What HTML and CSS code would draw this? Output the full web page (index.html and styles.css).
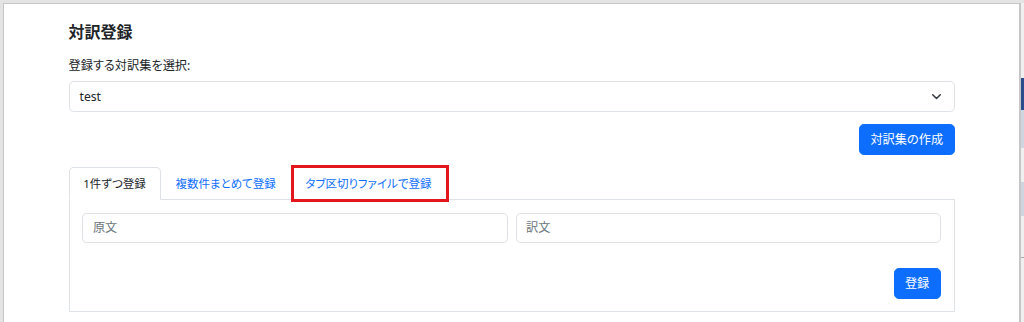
FILE: index.html
```html
<!DOCTYPE html>
<html lang="ja">
<head>
    <meta charset="UTF-8">
    <meta name="viewport" content="width=device-width, initial-scale=1.0">
    <title>対訳登録</title>
    <link rel="stylesheet" href="styles.css">
</head>
<body>
    <div class="modal">
        <div class="content">
            <h5 class="title">対訳登録</h5>
            <label class="label">登録する対訳集を選択:</label>
            <div class="select">
                <span>test</span>
                <svg width="11" height="11" viewBox="0 0 16 16"><path d="M2.5 5.5l5.5 5.5 5.5-5.5" fill="none" stroke="#343a40" stroke-width="2.2" stroke-linecap="round" stroke-linejoin="round"/></svg>
            </div>
            <div class="actions">
                <button class="btn">対訳集の作成</button>
            </div>

            <!-- tabs -->
            <ul class="tabs">
                <li><a class="tab active">1件ずつ登録</a></li>
                <li><a class="tab">複数件まとめて登録</a></li>
                <li class="marked"><a class="tab">タブ区切りファイルで登録</a><span class="highlight"></span></li>
            </ul>
            <div class="pane">
                <div class="fields">
                    <input type="text" placeholder="原文">
                    <input type="text" placeholder="訳文">
                </div>
                <div class="submit">
                    <button class="btn">登録</button>
                </div>
            </div>
        </div>
    </div>
    <div class="peek">
        <div class="peek-light" style="height: 75px"></div>
        <div class="peek-blue" style="height: 32px"></div>
        <div class="peek-gray" style="height: 38px"></div>
        <div class="peek-light" style="height: 34px"></div>
        <div class="peek-gray" style="height: 34px"></div>
        <div class="peek-light" style="height: 41px"></div>
        <div class="peek-line"></div>
        <div class="peek-light" style="height: 70px"></div>
    </div>
</body>
</html>
```

FILE: styles.css
```css
* {
    box-sizing: border-box;
}
body {
    margin: 0;
    height: 322px;
    overflow: hidden;
    padding: 3px 0 0 3px;
    background-color: #e4e4e4;
    display: flex;
    font-family: "Noto Sans", "Noto Sans CJK JP", sans-serif;
    font-feature-settings: "palt";
    font-size: 12.2px;
    line-height: 19.2px;
    color: #212529;
}
.modal {
    flex: 1;
    background-color: white;
    border: 1px solid #c6c6c6;
    border-bottom: none;
}
.content {
    width: 886px;
    margin: 0 auto;
    padding-top: 19px;
}
.title {
    margin: 0 0 14px;
    font-size: 16px;
    font-weight: 700;
    line-height: 1.2;
}
.label {
    display: block;
    margin-bottom: 6px;
}
.select {
    height: 30.4px;
    display: flex;
    align-items: center;
    justify-content: space-between;
    padding: 0 12px 0 10px;
    border: 1px solid #dee2e6;
    border-radius: 4.8px;
}
.actions {
    display: flex;
    justify-content: flex-end;
    margin-top: 12px;
}
.btn {
    font: inherit;
    padding: 4.8px 10.4px;
    color: white;
    background-color: #0d6efd;
    border: 1px solid #0d6efd;
    border-radius: 4.8px;
}
.tabs {
    display: flex;
    list-style: none;
    margin: 12px 0 0;
    padding: 0;
    border-bottom: 1px solid #dee2e6;
    font-size: 11.5px;
}
.tabs li {
    margin-bottom: -1px;
}
.tab {
    display: block;
    padding: 6px 13.8px;
    color: #0d6efd;
    border: 1px solid transparent;
    border-radius: 4.8px 4.8px 0 0;
}
.tab.active {
    color: #212529;
    background-color: white;
    border-color: #dee2e6 #dee2e6 white;
}
.marked {
    position: relative;
}
.highlight {
    position: absolute;
    top: -2px;
    bottom: -2px;
    left: 1px;
    right: -3px;
    border: 3px solid #e2161c;
}
.pane {
    border: 1px solid #dee2e6;
    border-top: none;
    padding: 12.8px;
}
.fields {
    display: grid;
    grid-template-columns: 1fr 1fr;
    gap: 8px;
}
.fields input {
    font: inherit;
    height: 30.4px;
    padding: 0 9.6px;
    border: 1px solid #dee2e6;
    border-radius: 4.8px;
    color: #212529;
}
.fields input::placeholder {
    color: #6c757d;
}
.submit {
    display: flex;
    justify-content: flex-end;
    margin-top: 24.8px;
}
.peek {
    width: 3px;
    border-left: 1px solid #c6c6c6;
    box-sizing: content-box;
}
.peek-light {
    background-color: #f0f0f0;
}
.peek-blue {
    background-color: #2c4d8d;
}
.peek-gray {
    background-color: #cfd6e0;
}
.peek-line {
    height: 1px;
    background-color: #aaaaaa;
}
```
